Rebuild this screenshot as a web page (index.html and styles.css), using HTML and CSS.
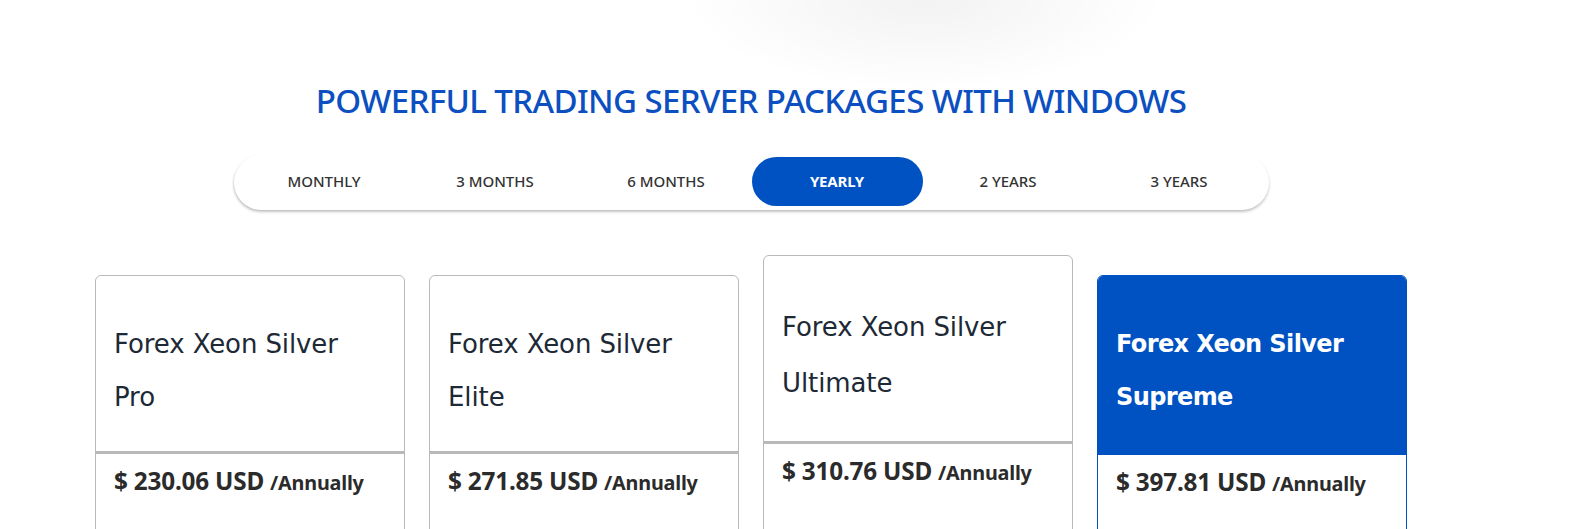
FILE: index.html
```html
<!DOCTYPE html>
<html lang="en">
<head>
<meta charset="utf-8">
<title>Trading Server Packages</title>
<link rel="stylesheet" href="styles.css">
</head>
<body>
<main class="page">
  <h2 class="section-title">POWERFUL TRADING SERVER PACKAGES WITH WINDOWS</h2>
  <nav class="billing-tabs">
    <button class="tab">MONTHLY</button>
    <button class="tab">3 MONTHS</button>
    <button class="tab">6 MONTHS</button>
    <button class="tab tab--active">YEARLY</button>
    <button class="tab">2 YEARS</button>
    <button class="tab">3 YEARS</button>
  </nav>
  <section class="plans">
    <article class="plan">
      <header class="plan__head"><h3 class="plan__name">Forex Xeon Silver<br>Pro</h3></header>
      <div class="plan__body"><p class="plan__price">$ 230.06 USD <span class="plan__period">/Annually</span></p></div>
    </article>
    <article class="plan">
      <header class="plan__head"><h3 class="plan__name">Forex Xeon Silver<br>Elite</h3></header>
      <div class="plan__body"><p class="plan__price">$ 271.85 USD <span class="plan__period">/Annually</span></p></div>
    </article>
    <article class="plan plan--raised">
      <header class="plan__head"><h3 class="plan__name">Forex Xeon Silver<br>Ultimate</h3></header>
      <div class="plan__body"><p class="plan__price">$ 310.76 USD <span class="plan__period">/Annually</span></p></div>
    </article>
    <article class="plan plan--featured">
      <header class="plan__head"><h3 class="plan__name">Forex Xeon Silver<br>Supreme</h3></header>
      <div class="plan__body"><p class="plan__price">$ 397.81 USD <span class="plan__period">/Annually</span></p></div>
    </article>
  </section>
</main>
</body>
</html>
```
FILE: styles.css
```css
html, body {
  margin: 0;
  padding: 0;
}
body {
  background: #ffffff radial-gradient(ellipse 240px 90px at 924px 0px, rgba(0,0,0,0.05) 0%, rgba(0,0,0,0.025) 55%, rgba(0,0,0,0) 100%) no-repeat;
  font-family: "DejaVu Sans", "Noto Sans", sans-serif;
  color: #1e2936;
  height: 529px;
  overflow: hidden;
}
.page {
  width: 1312px;
  margin-left: 95px;
  padding-top: 82px;
  display: flex;
  flex-direction: column;
  align-items: center;
}
.section-title {
  margin: 0;
  font-family: "Noto Sans", sans-serif;
  font-weight: 500;
  font-size: 33px;
  line-height: 38px;
  color: #0b4fc1;
  letter-spacing: -0.6px;
}
.billing-tabs {
  margin-top: 35px;
  width: 1035px;
  box-sizing: border-box;
  padding: 2px 4px 4px 5px;
  display: grid;
  grid-template-columns: repeat(6, 171px);
  background: #fff;
  border-radius: 28px;
  box-shadow: 0 2px 3px rgba(0,0,0,0.22), -1px 1px 2px rgba(0,0,0,0.06);
}
.tab {
  height: 49px;
  border: 0;
  border-radius: 25px;
  background: transparent;
  font-family: "Noto Sans", sans-serif;
  font-size: 15px;
  font-weight: 500;
  color: #333;
  padding: 0 0 2px;
  cursor: pointer;
}
.tab--active {
  background: #0052c3;
  color: #fff;
  font-weight: 700;
  letter-spacing: -0.2px;
}
.plans {
  align-self: stretch;
  margin-top: 45px;
  display: grid;
  grid-template-columns: repeat(4, 310px);
  column-gap: 24px;
  align-items: start;
}
.plan {
  margin-top: 20px;
  border: 1px solid #b9b9b9;
  border-radius: 6px;
  background: #fff;
  overflow: hidden;
}
.plan__head {
  padding: 42px 18px 27px;
  border-bottom: 3px solid #b9b9b9;
}
.plan__name {
  margin: 0;
  font-family: "DejaVu Sans", sans-serif;
  font-weight: 400;
  font-size: 26px;
  line-height: 53px;
  color: #1e2936;
  letter-spacing: -0.1px;
}
.plan__body {
  min-height: 220px;
  padding: 12px 18px;
}
.plan__price {
  margin: 0;
  font-family: "Noto Sans", sans-serif;
  font-weight: 700;
  font-size: 24.3px;
  line-height: 30px;
  color: #2b2b2b;
  letter-spacing: -0.2px;
}
.plan__period {
  font-size: 19.8px;
}
.plan--raised {
  margin-top: 0;
}
.plan--raised .plan__head {
  padding-top: 43px;
  padding-bottom: 30px;
}
.plan--raised .plan__name {
  line-height: 56px;
}
.plan--featured {
  border-color: #0052c3;
}
.plan--featured .plan__head {
  background: #0052c3;
  border-bottom: 0;
  padding-bottom: 31px;
}
.plan--featured .plan__name {
  color: #fff;
  font-weight: 700;
  font-size: 24px;
  letter-spacing: -0.6px;
}
```
